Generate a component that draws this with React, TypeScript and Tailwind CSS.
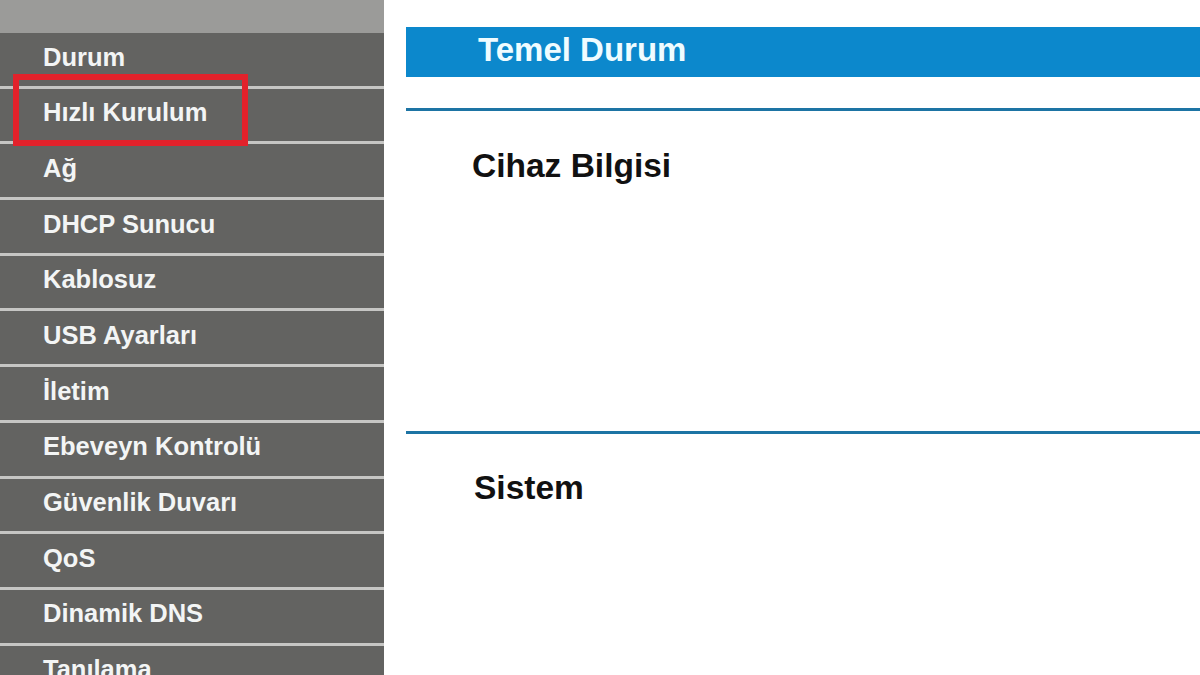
import React from "react";

const items = [
  "Durum",
  "Hızlı Kurulum",
  "Ağ",
  "DHCP Sunucu",
  "Kablosuz",
  "USB Ayarları",
  "İletim",
  "Ebeveyn Kontrolü",
  "Güvenlik Duvarı",
  "QoS",
  "Dinamik DNS",
  "Tanılama",
];

export default function App() {
  return (
    <div
      className="flex w-[1200px] h-[675px] overflow-hidden bg-white"
      style={{ fontFamily: '"Liberation Sans", Arial, sans-serif' }}
    >
      <aside className="relative w-[384px] shrink-0 bg-[#636361] flex flex-col">
        <div className="h-[33px] shrink-0 bg-[#9b9b99]" />
        {items.map((t) => (
          <div
            key={t}
            className="h-[55.7px] shrink-0 border-b-[3px] border-[#c6c6c4] flex items-center pl-[43px] pb-1"
          >
            <span className="text-[25.5px] leading-none font-bold text-[#f3f5f5] whitespace-nowrap">{t}</span>
          </div>
        ))}
        <div className="absolute left-[13px] top-[74px] w-[235px] h-[72px] border-[6px] border-[#e2222b]" />
      </aside>
      <main className="flex-1 flex flex-col pl-[22px]">
        <div className="mt-[27px] h-[50px] bg-[#0c88cc] flex items-center pl-[72px] pb-[6px]">
          <span className="text-[33px] leading-none font-bold text-[#effcff]">Temel Durum</span>
        </div>
        <div className="mt-[31px] h-[3px] bg-[#1d74a4]" />
        <div className="mt-[38px] pl-[66px] h-[33px]">
          <span className="text-[33.5px] leading-none font-bold text-[#111]">Cihaz Bilgisi</span>
        </div>
        <div className="mt-[249px] h-[3px] bg-[#1d74a4]" />
        <div className="mt-[37px] pl-[68px] h-[33px]">
          <span className="text-[33.5px] leading-none font-bold text-[#111]">Sistem</span>
        </div>
      </main>
    </div>
  );
}
